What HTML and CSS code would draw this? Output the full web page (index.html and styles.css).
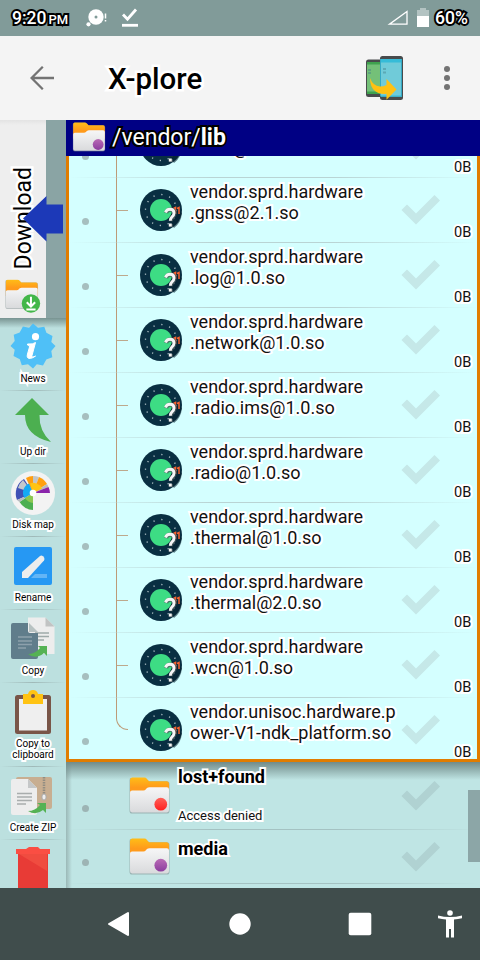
FILE: index.html
```html
<!DOCTYPE html>
<html lang="en">
<head>
<meta charset="utf-8">
<title>X-plore</title>
<link rel="stylesheet" href="styles.css">
</head>
<body>
<svg class="defs" width="0" height="0">
  <defs>
    <linearGradient id="gOrange" x1="0" y1="0" x2="0" y2="1"><stop offset="0" stop-color="#ffbd17"/><stop offset=".5" stop-color="#ff9a1b"/></linearGradient>
    <linearGradient id="gPaper" x1="0" y1="0" x2="0" y2="1"><stop offset="0" stop-color="#f6f6f7"/><stop offset="1" stop-color="#d9dadc"/></linearGradient>
    <linearGradient id="gPurple" x1="0" y1="0" x2="0" y2="1"><stop offset="0" stop-color="#b96bb5"/><stop offset="1" stop-color="#8c3d9f"/></linearGradient>
    <linearGradient id="gRed" x1="0" y1="0" x2="0" y2="1"><stop offset="0" stop-color="#ff6058"/><stop offset="1" stop-color="#ff2020"/></linearGradient>
    <symbol id="folder" viewBox="0 0 40 36">
      <path d="M2 1h13q1.500 0 2.500 1.300L19.500 4H37q2.500 0 2.500 2.500V33q0 2.500-2.500 2.500H3Q.5 35.500.5 33V3Q.5 1 2 1z" fill="#7c8b8c" opacity=".55"/>
      <path d="M3 .5h12q1.500 0 2.500 1.300L19.500 4H37q2 0 2 2.500V20H1V3Q1 .5 3 .5z" fill="url(#gOrange)"/>
      <path d="M3 13h11q1.500 0 2.500-1.200l1-1Q18.500 10 20 10h17q2 0 2 2v20.500q0 2-2 2H3q-2 0-2-2V15q0-2 2-2z" fill="url(#gPaper)"/>
    </symbol>
    <symbol id="so" viewBox="0 0 42 42">
      <circle cx="21" cy="21" r="21" fill="#092f42"/>
      <circle cx="21" cy="21" r="15.500" fill="none" stroke="#b9c9ce" stroke-width="1.300" stroke-dasharray="1.200 6.900"/>
      <path d="M21 21l13 18q7-5 8-15l-9-7z" fill="#05222f" opacity=".6"/>
      <circle cx="21" cy="21" r="11" fill="#3ddc84"/>
      <path d="M33.500 19.500l2-1V25M37 19.500l2-1V25" fill="none" stroke="#f8622e" stroke-width="1.500"/>
      <path d="M26 24q1-3.300 4.500-3.300 4 0 4 3.800 0 2.200-2 3.800-1.700 1.400-1.700 4M30.800 35v3" fill="none" stroke="#4a5a5c" stroke-width="4.200" opacity=".8"/>
      <path d="M25.500 23.500q1-3.300 4.500-3.300 4 0 4 3.800 0 2.200-2 3.800-1.700 1.400-1.700 4M30.300 34.500v3" fill="none" stroke="#f5f5f5" stroke-width="2.900"/>
    </symbol>
    <symbol id="check" viewBox="0 0 40 30">
      <path d="M.5 15L6 9.500l9 9L33.500 0 39 5.500 15 29.500z" fill="currentColor"/>
    </symbol>
  </defs>
</svg>

<header class="status">
  <span class="clock">9:20<small>PM</small></span>
  <svg class="st-msg" width="22" height="20" viewBox="0 0 22 20"><circle cx="10" cy="9" r="7.700" fill="#fff"/><circle cx="10" cy="9" r="1.500" fill="#819b99"/><circle cx="2.500" cy="16.300" r="2.100" fill="#fff"/><path d="M19.500 5.500v5M19.500 12v1.500" stroke="#fff" stroke-width="1.500"/></svg>
  <svg class="st-done" width="18" height="20" viewBox="0 0 18 20"><path d="M2 6.500l4.500 4.700L15 1.500" fill="none" stroke="#fff" stroke-width="2.800"/><path d="M1 17.300h16" stroke="#fff" stroke-width="2.800"/></svg>
  <svg class="st-sig" width="22" height="17" viewBox="0 0 22 17"><path d="M2.500 15.200H20V2.500z" fill="none" stroke="#fff" stroke-width="1.300"/></svg>
  <svg class="st-bat" width="12" height="19" viewBox="0 0 12 19"><path d="M0 2h3V0h6v2h3v6H0z" fill="#fff" opacity=".4"/><path d="M0 8h12v11H0z" fill="#fff"/></svg>
  <span class="pct">60%</span>
</header>

<div class="appbar">
  <svg class="back" width="24" height="24" viewBox="0 0 24 24"><path d="M24 12H2M12.800.8L1.600 12l11.200 11.200" fill="none" stroke="#737373" stroke-width="2.300"/></svg>
  <h1>X-plore</h1>
  <svg class="phones" width="38" height="44" viewBox="0 0 38 44">
    <rect x="0" y="3.500" width="20" height="37.500" rx="2.500" fill="#484b4c"/><rect x="1" y="6" width="18" height="32" fill="#74c078"/><path d="M1 6h18v2.500H1zM1 35.500h18V38H1z" fill="#3fa24e"/>
    <rect x="14" y="0" width="23" height="44" rx="2.500" fill="#484b4c"/><rect x="15" y="3" width="21" height="37.500" fill="#70cbd9"/><path d="M15 3h21v3.500H15zM15 39.500h21v1.200H15z" fill="#36bcd8"/><path d="M14.500 3v37.500M35.500 3v37.500" stroke="#36a9c5"/>
    <path d="M2 13h3v2H2zM2 16h3v2H2zM17 12h3v2h-3zM17 15.500h3v2h-3z" fill="#44818a" opacity=".45"/>
    <path d="M4 22q3 8 10 8.500 3.500 0 6.500-1.500v-6l10 10.500-10 10.300v-6q-7 1-11.500-2.800Q4 31 4 22z" fill="#ffc112"/>
  </svg>
  <svg class="more" width="6" height="24" viewBox="0 0 6 24"><circle cx="3" cy="3" r="3" fill="#737373"/><circle cx="3" cy="12" r="3" fill="#737373"/><circle cx="3" cy="21" r="3" fill="#737373"/></svg>
</div>

<main class="main">
  <aside class="side">
    <div class="other">
      <div class="tab">
        <span class="tabname">Download</span>
        <svg width="36" height="34" viewBox="0 0 43 40"><use href="#folder" width="40" height="36"/><circle cx="31" cy="29" r="11" fill="#43b749"/><path d="M31 21v11M26 27.500l5 5 5-5M25.500 36h11" fill="none" stroke="#fff" stroke-width="2.400"/></svg>
      </div>
      <svg class="swap" width="41" height="46" viewBox="0 0 41 46"><path d="M0 22.500L23.500 0v8.500H40v29H23.500V45.500z" fill="#1c39b8"/></svg>
    </div>
    <div class="tools">
      <div class="tool"><svg width="46" height="46" viewBox="0 0 46 46"><path d="M45.500 23l-4.200 5 1 6.300-6 2.200L33 42.500l-6.200-1.200L23 45.500l-5-4.200-6.200 1-2-6L3.500 33l1.200-6.200L.5 23l4.200-5-1-6.300 6-2.200 3.200-6 6.200 1.200L23 .5l5 4.200 6.300-1 2.100 6 6.100 3.200-1.200 6.200z" fill="#4fc0f7"/><circle cx="25.500" cy="13.700" r="3.600" fill="#fff"/><path d="M17.500 21q5.500.5 8-1.500l-3.500 13q-.6 2.500 3.500.6-6 4-8 1.400-.7-1 0-3.500l2-7q.5-1.800-2-2z" fill="#fff" stroke="#fff" stroke-width="1"/></svg><span>News</span></div>
      <div class="tool"><svg width="46" height="46" viewBox="0 0 46 46"><path d="M22 1L5 18h10q0 21 26 27Q29 34 29.500 18H39z" fill="#4caf50"/></svg><span>Up dir</span></div>
      <div class="tool"><svg width="46" height="46" viewBox="0 0 46 46"><circle cx="23" cy="23" r="22" fill="#f3f3f3"/><path d="M23 23L14 9A17 17 0 0 0 7 30z" fill="#3f51b5"/><path d="M23 23L13 10A17 17 0 0 0 8 18z" fill="#c5c8cc"/><path d="M23 23V6A17 17 0 0 0 16 8z" fill="#ff9d0f"/><path d="M23 23L29 7A17 17 0 0 0 23 6z" fill="#c2c4c6"/><path d="M23 23L37 14A17 17 0 0 0 29 7z" fill="#ffa00f"/><path d="M23 23L38.500 17 37 14z" fill="#bbb"/><path d="M23 23h17a17 17 0 0 0-1.500-6z" fill="#8b24ab"/><path d="M23 23v17A17 17 0 0 1 9.500 32z" fill="#4caf50"/><path d="M23 23L7 30l2.500 2z" fill="#b7bbc0"/><path d="M23 23l-4-9.500A10 10 0 0 0 14.500 28z" fill="#14a9f4"/><path d="M23 23l-3-9.500q5-2 10 2l2 3z" fill="#ffc411"/><path d="M23 23l-8 5q3 4.500 8 5z" fill="#8bc751"/><circle cx="23" cy="23" r="3.300" fill="#fff"/></svg><span>Disk map</span></div>
      <div class="tool"><svg width="46" height="46" viewBox="0 0 46 46"><rect x="4" y="4" width="38" height="38" rx="2" fill="#2698f3"/><path d="M12 35v-6l18-16q1.500-1 3 .3l1 1.300q1 1.500 0 2.900L18 35z" fill="#ededed"/><path d="M25 31h12v4H21z" fill="#63b5f6"/></svg><span>Rename</span></div>
      <div class="tool"><svg width="46" height="46" viewBox="0 0 46 46"><path d="M18 1.500h17.500l9 9V38H18z" fill="#ededed"/><path d="M35.500 1.500l9 9h-9z" fill="#c1c3c3"/><path d="M25 17h14M25 20.500h14M25 24h9" stroke="#9eaaa9" stroke-width="1.500"/><path d="M3 7h15v8q0 2 2 2h8v24q0 2-2 2H3q-2 0-2-2V9q0-2 2-2z" fill="#607d8b"/><path d="M19 7v9h9z" fill="#b8c2c2"/><path d="M8 21h14M8 25h14M8 28.500h14M8 32h8" stroke="#8da1ac" stroke-width="1.500"/><path d="M18 38q7 0 12-6l-2-2h9v10l-3-3q-8 7-16 1z" fill="#55b254"/></svg><span>Copy</span></div>
      <div class="tool tall"><svg width="46" height="46" viewBox="0 0 46 46"><rect x="5" y="6" width="36" height="39" rx="2.500" fill="#795548"/><path d="M9 10h28v31.500H9z" fill="#efefef"/><path d="M13 5h5q1-4 5-4t5 4h5v10H13z" fill="#ffc313"/><circle cx="23" cy="7" r="2" fill="#795548"/></svg><span>Copy to<br>clipboard</span></div>
      <div class="tool"><svg width="46" height="46" viewBox="0 0 46 46"><rect x="6" y="4" width="36" height="32" rx="2" fill="#c8ae91"/><path d="M34 4v20" stroke="#928d82" stroke-width="2.500" stroke-dasharray="1.500 1"/><rect x="32" y="21" width="4" height="6" rx="2" fill="#eee" stroke="#aaa"/><path d="M3 6h15l9 9v25q0 2-2 2H3q-2 0-2-2V8q0-2 2-2z" fill="#ededed"/><path d="M18 6l9 9h-9z" fill="#c5c7c8"/><path d="M7 20.500h15M7 24h15M7 27.500h15M7 31h9" stroke="#a9adad" stroke-width="1.500"/><path d="M18 38q7 0 12-6l-3-2h9v10l-3-3q-7 6-15 1z" fill="#55b254"/></svg><span>Create ZIP</span></div>
      <div class="tool"><svg width="46" height="46" viewBox="0 0 46 46"><path d="M8 6h30v40H8z" fill="#e83b36"/><path d="M9 8h28v17z" fill="#f04c40"/><path d="M6 3h10l3-2h9l2 2h10v5H6z" fill="#fa4e43"/></svg></div>
    </div>
  </aside>

  <section class="pane">
    <div class="path"><svg width="34" height="30" viewBox="0 0 40 36"><use href="#folder"/><circle cx="31" cy="27" r="6.500" fill="url(#gPurple)"/></svg><span>/vendor/<b>lib</b></span></div>
    <div class="list">
      <div class="row"><i class="dot"></i><i class="tick"></i><svg class="ico"><use href="#so"/></svg><p><br>.cnss@1.0.so</p><svg class="chk"><use href="#check"/></svg><em>0B</em></div>
      <div class="row"><i class="dot"></i><i class="tick"></i><svg class="ico"><use href="#so"/></svg><p>vendor.sprd.hardware<br>.gnss@2.1.so</p><svg class="chk"><use href="#check"/></svg><em>0B</em></div>
      <div class="row"><i class="dot"></i><i class="tick"></i><svg class="ico"><use href="#so"/></svg><p>vendor.sprd.hardware<br>.log@1.0.so</p><svg class="chk"><use href="#check"/></svg><em>0B</em></div>
      <div class="row"><i class="dot"></i><i class="tick"></i><svg class="ico"><use href="#so"/></svg><p>vendor.sprd.hardware<br>.network@1.0.so</p><svg class="chk"><use href="#check"/></svg><em>0B</em></div>
      <div class="row"><i class="dot"></i><i class="tick"></i><svg class="ico"><use href="#so"/></svg><p>vendor.sprd.hardware<br>.radio.ims@1.0.so</p><svg class="chk"><use href="#check"/></svg><em>0B</em></div>
      <div class="row"><i class="dot"></i><i class="tick"></i><svg class="ico"><use href="#so"/></svg><p>vendor.sprd.hardware<br>.radio@1.0.so</p><svg class="chk"><use href="#check"/></svg><em>0B</em></div>
      <div class="row"><i class="dot"></i><i class="tick"></i><svg class="ico"><use href="#so"/></svg><p>vendor.sprd.hardware<br>.thermal@1.0.so</p><svg class="chk"><use href="#check"/></svg><em>0B</em></div>
      <div class="row"><i class="dot"></i><i class="tick"></i><svg class="ico"><use href="#so"/></svg><p>vendor.sprd.hardware<br>.thermal@2.0.so</p><svg class="chk"><use href="#check"/></svg><em>0B</em></div>
      <div class="row"><i class="dot"></i><i class="tick"></i><svg class="ico"><use href="#so"/></svg><p>vendor.sprd.hardware<br>.wcn@1.0.so</p><svg class="chk"><use href="#check"/></svg><em>0B</em></div>
      <div class="row last"><i class="dot"></i><i class="tick"></i><svg class="ico"><use href="#so"/></svg><p>vendor.unisoc.hardware.p<br>ower-V1-ndk_platform.so</p><svg class="chk"><use href="#check"/></svg><em>0B</em></div>
    </div>
    <div class="below">
      <div class="dir denied"><i class="dot"></i><svg class="fold" viewBox="0 0 40 36"><use href="#folder"/><circle cx="31" cy="26.500" r="6.200" fill="url(#gRed)"/></svg><div class="name"><b>lost+found</b><small>Access denied</small></div><svg class="chk"><use href="#check"/></svg></div>
      <div class="dir media"><i class="dot"></i><svg class="fold" viewBox="0 0 40 36"><use href="#folder"/><circle cx="31" cy="26.500" r="6.200" fill="url(#gPurple)"/></svg><div class="name"><b>media</b></div><svg class="chk"><use href="#check"/></svg></div>
      <i class="thumb"></i>
    </div>
  </section>
</main>

<nav class="nav">
  <svg width="24" height="26" viewBox="0 0 24 26"><path d="M21 2v22L2 13z" fill="#fff" stroke="#fff" stroke-width="2" stroke-linejoin="round"/></svg>
  <svg width="22" height="22" viewBox="0 0 22 22"><circle cx="11" cy="11" r="10.700" fill="#fff"/></svg>
  <svg width="24" height="24" viewBox="0 0 24 24"><rect x=".7" y=".7" width="22.600" height="22.600" rx="2" fill="#fff"/></svg>
  <svg width="24" height="28" viewBox="0 0 24 28"><circle cx="12" cy="3" r="2.800" fill="#fff"/><path d="M0 5.500q12 3 24 0v2.800q-4 1-8 1.200V27.500h-3V19h-2v8.500H8V9.500Q4 9.300 0 8.300z" fill="#fff"/></svg>
</nav>
</body>
</html>
```
FILE: styles.css
```css
* { box-sizing: border-box; }
body {
  margin: 0;
  width: 480px;
  height: 960px;
  overflow: hidden;
  display: flex;
  flex-direction: column;
  font-family: Roboto, "Liberation Sans", sans-serif;
  color: #000;
}
svg { display: block; flex: none; }
.defs { position: absolute; }
i { display: block; flex: none; }

.status {
  height: 36px;
  flex: none;
  display: flex;
  background: #819b99;
  color: #fff;
  font-size: 17.5px;
  font-weight: 500;
  line-height: 20px;
  padding: 8px 12px 0;
}
.clock, .pct { -webkit-text-stroke: 4px #000; paint-order: stroke fill; }
.clock { width: 74px; white-space: nowrap; }
.clock small { font-size: 13px; margin-left: 2px; }
.st-done { margin-left: 13px; }
.st-sig { margin: 1px 8px 0 auto; }
.st-bat { margin-right: 6px; }
.pct { width: 33px; white-space: nowrap; }

.appbar {
  height: 84px;
  flex: none;
  display: flex;
  align-items: center;
  background: #f4f4f4;
  padding: 0 30px;
}
.appbar h1 {
  margin: 2px 0 0 54px;
  font-size: 29.5px;
  font-weight: 500;
  line-height: 36px;
  -webkit-text-stroke: 5px #fff;
  paint-order: stroke fill;
}
.phones { margin: 0 40px 0 auto; }

.main { height: 768px; flex: none; display: flex; }
.side { width: 66px; background: #bce0df; overflow: hidden; }
.other { position: relative; height: 198px; background: #8aa4a4; }
.tab {
  width: 46px;
  height: 198px;
  background: linear-gradient(#e3e3e3, #eee 5px);
  display: flex;
  flex-direction: column;
  align-items: center;
  justify-content: flex-end;
  gap: 10px;
  padding-bottom: 5px;
}
.tabname {
  writing-mode: vertical-rl;
  transform: rotate(180deg);
  font-size: 23px;
  line-height: 28px;
  -webkit-text-stroke: 5px #fff;
  paint-order: stroke fill;
  margin-left: 2px;
}
.swap { position: absolute; left: 23px; top: 76px; }
.tools { height: 570px; overflow: hidden; background: linear-gradient(#789391, rgba(120,147,145,0) 10px); }
.tool {
  height: 73px;
  display: flex;
  flex-direction: column;
  align-items: center;
  padding-top: 6px;
  background: linear-gradient(90deg, rgba(150,170,170,0), #9fb9b8 50%, rgba(150,170,170,0)) bottom / 100% 1px no-repeat;
}
.tool:first-child { padding-top: 5px; }
.tool.tall { height: 84px; }
.tool span {
  font-size: 10px;
  line-height: 11px;
  margin-top: 3px;
  text-align: center;
  -webkit-text-stroke: 4px #fff;
  paint-order: stroke fill;
  white-space: nowrap;
}
.tool:first-child span { margin-top: 4px; }

.pane { width: 414px; display: flex; flex-direction: column; }
.path {
  height: 36px;
  flex: none;
  display: flex;
  align-items: center;
  gap: 6px;
  padding: 0 0 2px 6px;
  background: #000084;
  color: #fff;
  font-size: 23px;
}
.path span { -webkit-text-stroke: 4px #000; paint-order: stroke fill; }
.list {
  height: 606px;
  flex: none;
  overflow: hidden;
  background: #d4ffff;
  border: solid #e17c00;
  border-width: 0 3px 3px;
}
.row, .dir { display: flex; align-items: flex-start; }
.row {
  height: 65px;
  background:
    linear-gradient(90deg, rgba(170,190,190,0), #b9d4d4 35%, #b9d4d4 65%, rgba(170,190,190,0)) bottom / 100% 1px no-repeat,
    linear-gradient(#bd9b78, #bd9b78) 47px 0 / 1px 100% no-repeat;
}
.row:first-child { margin-top: -43px; }
.row.last { background: none; }
.dot {
  width: 7px;
  height: 7px;
  border-radius: 50%;
  background: #a6bfbf;
  margin: 40px 0 0 13px;
}
.tick { width: 11px; height: 1px; background: #bda98c; margin: 32px 0 0 28px; }
.last .tick {
  width: 12px;
  height: 32px;
  margin: 0 0 0 27px;
  background: none;
  border: solid #bd9b78;
  border-width: 0 0 1px 1px;
  border-bottom-left-radius: 12px;
}
.ico { width: 42px; height: 42px; margin: 11px 0 0 12px; }
.row p {
  margin: 3px 0 0 8px;
  width: 211px;
  font-size: 18px;
  line-height: 21px;
  color: #111;
  white-space: nowrap;
  -webkit-text-stroke: 4px #fff;
  paint-order: stroke fill;
}
.chk { width: 40px; height: 30px; margin-top: 17px; color: #c5e8e8; }
.row em {
  margin: 45px 0 0 13px;
  font-style: normal;
  font-size: 14.6px;
  line-height: 18px;
  color: #111;
  -webkit-text-stroke: 4px #fff;
  paint-order: stroke fill;
}

.below {
  position: relative;
  height: 126px;
  background:
    linear-gradient(#718b89, rgba(120,147,145,0) 18px),
    linear-gradient(90deg, #9bb8b7, rgba(155,184,183,0) 6px),
    #bfe5e4;
}
.dir {
  background: linear-gradient(90deg, rgba(150,170,170,0), #a4c2c2 35%, #a4c2c2 65%, rgba(150,170,170,0)) bottom / 100% 1px no-repeat;
}
.denied { height: 68px; }
.media { height: 54px; }
.dir .dot { margin: 43px 0 0 16px; background: #9db4b4; }
.media .dot { margin-top: 29px; }
.fold { width: 41px; height: 37px; margin: 15px 0 0 40px; }
.media .fold { margin-top: 8px; }
.name {
  width: 223px;
  margin: 4px 0 0 8px;
  display: flex;
  flex-direction: column;
  gap: 21px;
  -webkit-text-stroke: 4px #fff;
  paint-order: stroke fill;
}
.media .name { margin-top: 8px; }
.name b { font-size: 18px; line-height: 21px; }
.name small { font-size: 13px; line-height: 15px; color: #111; }
.dir .chk { color: #b0d2d2; margin-top: 19px; }
.media .chk { margin-top: 12px; }
.thumb { position: absolute; right: 0; top: 28px; width: 12px; height: 72px; background: #8ca6a7; }

.nav {
  height: 72px;
  flex: none;
  display: flex;
  align-items: center;
  background: #404d4c;
  padding-left: 107px;
}
.nav svg:nth-child(2) { margin-left: 98px; }
.nav svg:nth-child(3) { margin-left: 97px; }
.nav svg:nth-child(4) { margin-left: 66px; }
```
